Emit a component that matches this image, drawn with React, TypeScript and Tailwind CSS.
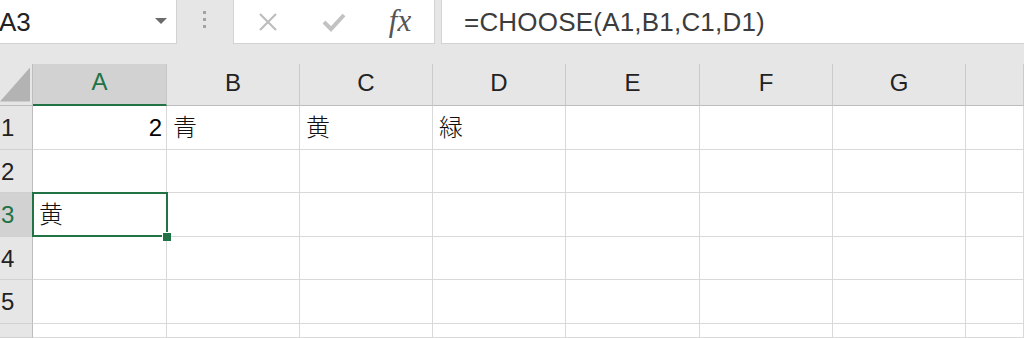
import React from "react";

const cols = ["A", "B", "C", "D", "E", "F", "G", ""];
const rowHeights = ["h-[44px]", "h-[43px]", "h-[44px]", "h-[43px]", "h-[44px]", "h-[14px]"];

const data: Record<string, string> = {
  "1-B": "青",
  "1-C": "黄",
  "1-D": "緑",
  "3-A": "黄",
};

export default function App() {
  const font = { fontFamily: '"Liberation Sans", "Noto Sans CJK JP", sans-serif' };
  return (
    <div className="w-[1024px] h-[338px] overflow-hidden bg-[#e6e6e6] text-black" style={font}>
      {/* Formula bar */}
      <div className="flex h-[44px]">
        <div className="w-[177px] h-[44px] bg-white border-r border-b border-[#d2d2d2] flex items-center justify-between pr-[9px]">
          <span className="text-[26px] leading-none text-[#222] -ml-[1px]">A3</span>
          <svg width="12" height="7" viewBox="0 0 12 7">
            <polygon points="0,0 12,0 6,6" fill="#6b6b6b" />
          </svg>
        </div>
        <div className="w-[56px] flex justify-center pt-[11px]">
          <div className="flex flex-col gap-[4px] ml-[-1px]">
            <div className="w-[3px] h-[3px] bg-[#a3a3a3]" />
            <div className="w-[3px] h-[3px] bg-[#a3a3a3]" />
            <div className="w-[3px] h-[3px] bg-[#a3a3a3]" />
          </div>
        </div>
        <div className="w-[202px] h-[44px] bg-white border-l border-r border-b border-[#d2d2d2] flex items-center">
          <div className="w-[68px] flex justify-center">
            <svg width="20" height="18" viewBox="0 0 20 18">
              <path d="M2 1 L18 17 M18 1 L2 17" stroke="#bdbdbd" strokeWidth="2.2" fill="none" />
            </svg>
          </div>
          <div className="w-[64px] flex justify-center">
            <svg width="24" height="20" viewBox="0 0 24 20">
              <path d="M2 10 L9 17 L22 3" stroke="#c2c2c2" strokeWidth="4" fill="none" strokeLinejoin="miter" />
            </svg>
          </div>
          <div className="w-[66px] flex justify-center">
            <span
              className="text-[31px] leading-none italic text-[#555] -mt-[3px] ml-[2px]"
              style={{ fontFamily: '"Liberation Serif", "DejaVu Serif", serif' }}
            >
              fx
            </span>
          </div>
        </div>
        <div className="w-[6px]" />
        <div className="flex-1 h-[44px] bg-white border-l border-b border-[#d2d2d2] flex items-center pl-[22px]">
          <span className="text-[26px] leading-none text-[#3c3c3c] tracking-[0.2px] mt-[1px]">=CHOOSE(A1,B1,C1,D1)</span>
        </div>
      </div>

      <div className="h-[20px]" />

      {/* Grid */}
      <div className="grid grid-cols-[33px_134px_133px_133px_133px_134px_133px_133px_1fr]">
        {/* Header row */}
        <div className="h-[42px] bg-[#e6e6e6] border-r border-b border-[#bdbdbd] flex items-end justify-end pr-[2px] pb-[3px]">
          <svg width="31" height="35" viewBox="0 0 31 35">
            <polygon points="0,35 31,0 31,35" fill="#b3b3b3" />
          </svg>
        </div>
        {cols.map((c, i) =>
          c === "A" ? (
            <div
              key={c}
              className="h-[42px] bg-[#d2d2d2] border-r border-[#c6c6c6] border-b-[2px] border-b-[#217346] flex items-center justify-center text-[24px] leading-none text-[#217346] pb-[4px]"
            >
              {c}
            </div>
          ) : (
            <div
              key={"h" + i}
              className="h-[42px] bg-[#e6e6e6] border-r border-b border-r-[#cacaca] border-b-[#bdbdbd] flex items-center justify-center text-[24px] leading-none text-[#222] pb-[3px]"
            >
              {c}
            </div>
          )
        )}

        {rowHeights.map((h, ri) => {
          const r = ri + 1;
          const sel = r === 3;
          return (
            <React.Fragment key={r}>
              <div
                className={`${h} ${
                  sel ? "bg-[#d2d2d2] text-[#217346]" : "bg-[#e6e6e6] text-[#222]"
                } border-r border-b border-r-[#bdbdbd] border-b-[#d0d0d0] flex items-start pl-[1px] text-[24px] leading-none overflow-hidden`}
              >
                <span className="mt-[10px]">{r}</span>
              </div>
              {cols.map((c, ci) => {
                const key = `${r}-${c}`;
                const val = r === 1 && c === "A" ? "2" : data[key];
                const isSel = sel && c === "A";
                return (
                  <div
                    key={key + ci}
                    className={`${h} relative ${isSel ? "z-10" : ""} bg-white border-r border-b border-[#d9d9d9] flex items-center text-[24px] leading-none ${
                      r === 1 && c === "A" ? "justify-end pr-[4px]" : "pl-[6px]"
                    }`}
                  >
                    {val && (
                      <span className={/[0-9]/.test(val) ? "" : "mt-[1px] font-light text-[#111]"}>{val}</span>
                    )}
                    {isSel && (
                      <>
                        <div className="absolute -left-[1px] -top-[1px] -right-[2px] -bottom-[1px] border-2 border-[#217346]" />
                        <div className="absolute -right-[5px] -bottom-[5px] w-[9px] h-[9px] bg-[#217346] border-t border-l border-white" />
                      </>
                    )}
                  </div>
                );
              })}
            </React.Fragment>
          );
        })}
      </div>
    </div>
  );
}
